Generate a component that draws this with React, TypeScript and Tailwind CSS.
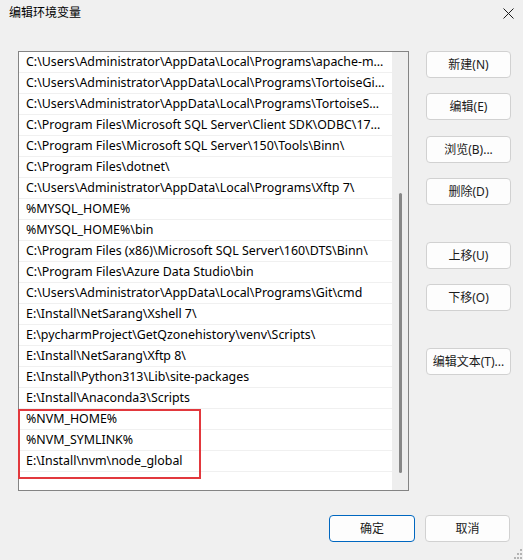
import React from 'react';

const paths = [
  'C:\\Users\\Administrator\\AppData\\Local\\Programs\\apache-maven-3.9.6\\bin',
  'C:\\Users\\Administrator\\AppData\\Local\\Programs\\TortoiseGit\\bin',
  'C:\\Users\\Administrator\\AppData\\Local\\Programs\\TortoiseSVN\\bin',
  'C:\\Program Files\\Microsoft SQL Server\\Client SDK\\ODBC\\170\\Tools\\Binn\\',
  'C:\\Program Files\\Microsoft SQL Server\\150\\Tools\\Binn\\',
  'C:\\Program Files\\dotnet\\',
  'C:\\Users\\Administrator\\AppData\\Local\\Programs\\Xftp 7\\',
  '%MYSQL_HOME%',
  '%MYSQL_HOME%\\bin',
  'C:\\Program Files (x86)\\Microsoft SQL Server\\160\\DTS\\Binn\\',
  'C:\\Program Files\\Azure Data Studio\\bin',
  'C:\\Users\\Administrator\\AppData\\Local\\Programs\\Git\\cmd',
  'E:\\Install\\NetSarang\\Xshell 7\\',
  'E:\\pycharmProject\\GetQzonehistory\\venv\\Scripts\\',
  'E:\\Install\\NetSarang\\Xftp 8\\',
  'E:\\Install\\Python313\\Lib\\site-packages',
  'E:\\Install\\Anaconda3\\Scripts',
  '%NVM_HOME%',
  '%NVM_SYMLINK%',
  'E:\\Install\\nvm\\node_global',
];

function Btn({ label, primary, className = '' }: { label: string; primary?: boolean; className?: string }) {
  return (
    <button
      className={
        'h-[27px] w-[85px] rounded-[4px] bg-[#fdfdfd] text-[12px] leading-[16px] text-[#1b1b1b] ' +
        (primary ? 'border border-[#0067c0] ' : 'border border-[#d1d1d1] ') +
        className
      }
    >
      {label}
    </button>
  );
}

export default function App() {
  return (
    <div
      className="relative flex h-[560px] w-[523px] flex-col overflow-hidden bg-[#f0f0f0] text-black"
      style={{ fontFamily: '"Noto Sans", "Noto Sans CJK SC", sans-serif' }}
    >
      {/* title bar */}
      <div className="flex h-[26px] items-center justify-between pl-[9px] pr-[8px]">
        <span className="text-[12px] leading-[16px]">编辑环境变量</span>
        <svg width="11" height="11" viewBox="0 0 11 11" className="mr-[1px]">
          <path d="M0.5 0.5 L10.5 10.5 M10.5 0.5 L0.5 10.5" stroke="#1a1a1a" strokeWidth="1" />
        </svg>
      </div>

      <div className="mt-[25px] flex pl-[18px]">
        {/* path list */}
        <div className="relative flex h-[440px] w-[391px] border border-[#848484] bg-white">
          <div className="min-w-0 flex-1 overflow-hidden">
            {paths.map(p => (
              <div
                key={p}
                className="h-[21px] truncate border-b border-[#f0f0f0] pl-[7px] pr-[6px] text-[12.4px] leading-[20px]"
              >
                {p}
              </div>
            ))}
          </div>
          <div className="flex w-[16px] justify-center bg-[#eeeeee] pt-[141px]">
            <div className="h-[280px] w-[3px] rounded-full bg-[#878787]" />
          </div>

          {/* highlight around the nvm entries */}
          <div className="absolute left-[-1px] top-[357px] h-[70px] w-[183px] border-2 border-[#e2383d]" />
        </div>

        {/* side buttons */}
        <div className="ml-[17px] flex flex-col">
          <Btn label="新建(N)" />
          <Btn label="编辑(E)" className="mt-[15px]" />
          <Btn label="浏览(B)..." className="mt-[16px]" />
          <Btn label="删除(D)" className="mt-[15px]" />
          <Btn label="上移(U)" className="mt-[37px]" />
          <Btn label="下移(O)" className="mt-[15px]" />
          <Btn label="编辑文本(T)..." className="mt-[37px]" />
        </div>
      </div>

      <div className="mt-[24px] flex justify-end gap-[10px] pr-[13px]">
        <Btn label="确定" primary className="w-[86px]" />
        <Btn label="取消" />
      </div>

      {/* size grip */}
      <svg width="10" height="10" viewBox="0 0 10 10" className="absolute bottom-[1px] right-[1px]">
        <g fill="#b4b4b4">
          <rect x="8" y="0" width="2" height="2" />
          <rect x="5" y="4" width="2" height="2" />
          <rect x="8" y="4" width="2" height="2" />
          <rect x="2" y="8" width="2" height="2" />
          <rect x="5" y="8" width="2" height="2" />
          <rect x="8" y="8" width="2" height="2" />
        </g>
      </svg>
    </div>
  );
}
